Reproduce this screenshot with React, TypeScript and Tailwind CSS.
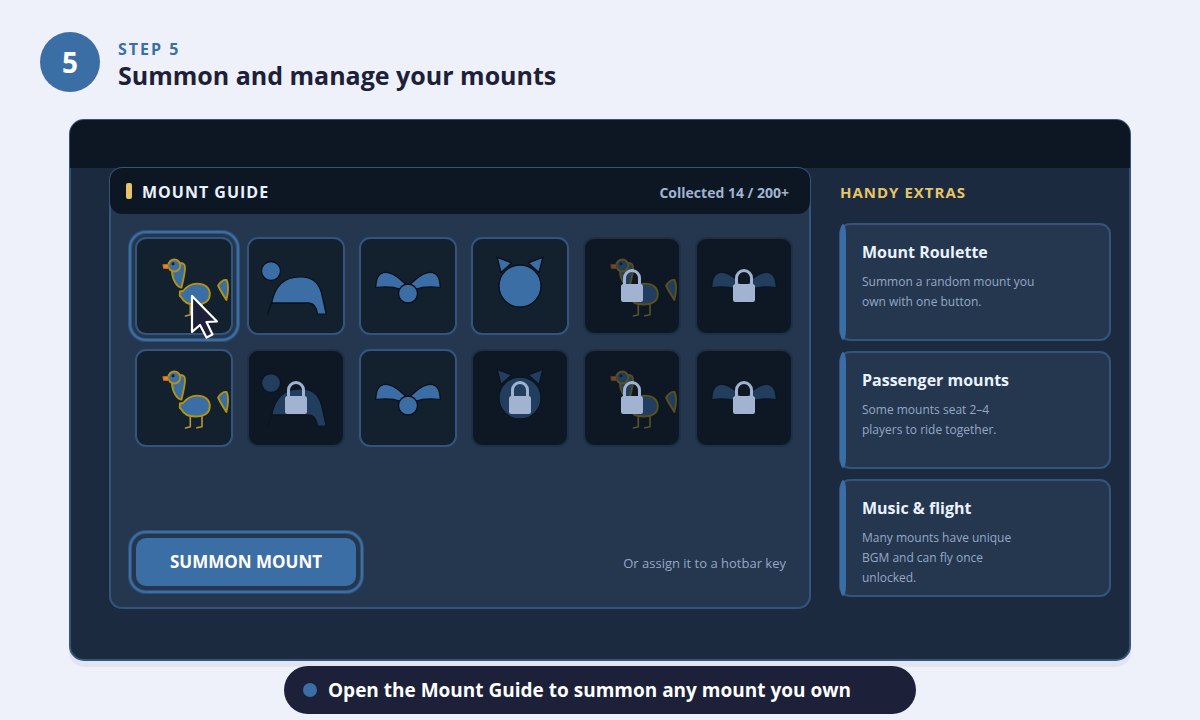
import { clsx } from 'clsx';

type Glyph = 'bird' | 'beast' | 'wings' | 'cat';

interface Mount {
  glyph: Glyph;
  locked?: boolean;
  selected?: boolean;
}

const mounts: Mount[] = [
  { glyph: 'bird', selected: true },
  { glyph: 'beast' },
  { glyph: 'wings' },
  { glyph: 'cat' },
  { glyph: 'bird', locked: true },
  { glyph: 'wings', locked: true },
  { glyph: 'bird' },
  { glyph: 'beast', locked: true },
  { glyph: 'wings' },
  { glyph: 'cat', locked: true },
  { glyph: 'bird', locked: true },
  { glyph: 'wings', locked: true },
];

const extras = [
  {
    title: 'Mount Roulette',
    lines: ['Summon a random mount you', 'own with one button.'],
  },
  {
    title: 'Passenger mounts',
    lines: ['Some mounts seat 2–4', 'players to ride together.'],
  },
  {
    title: 'Music & flight',
    lines: ['Many mounts have unique', 'BGM and can fly once', 'unlocked.'],
  },
];

function Bird() {
  return (
    <g stroke="#b5940f" strokeWidth="1.8" strokeLinejoin="round" fill="#3b6ea5">
      <path
        d="M54.3 66V76.7L49.5 78M66 66V76.7L60.8 77.8"
        fill="none"
        stroke="#b9953c"
        strokeWidth="1.6"
        strokeLinecap="round"
      />
      <path d="M45 25C48.5 25.5 49.5 27 49 31C48.5 38 46.5 45 45.5 49.7C42 49.5 36.5 43 36 34Z" />
      <path d="M43.8 53.5L47 53C51 48 56 45.6 61 45.6C69 45.6 73.8 50 73.8 56C73.8 63 68 66.5 59 66.5C52 66.5 47.5 63.5 45.5 59.5L43.8 58Z" />
      <path d="M82 47.5C84.5 44 88 41.4 90.6 42C92.6 46 92.3 54 90.4 62C87.5 57.5 84.3 52.5 82 47.5Z" />
      <circle cx="38.3" cy="27.5" r="6" />
      <path d="M26.8 26.7L32.5 26.4V30.4L27.6 30.4Z" fill="#e08a2c" stroke="#c7681c" strokeWidth="1" />
      <circle cx="37" cy="25.7" r="1.5" fill="#10202f" stroke="none" />
    </g>
  );
}

function Beast() {
  return (
    <g stroke="#08111b" strokeWidth="1.3" strokeLinejoin="round" fill="#3b6ea5">
      <circle cx="23" cy="33" r="9.5" />
      <path d="M23.7 65C27 47 37 38.8 52 38.8C67 38.8 72 47 74.5 59L78.2 76.2H69.5C68.5 69 66 65 60.5 65Z" />
      <path d="M23.7 65L19.5 76.5" fill="none" />
    </g>
  );
}

function Wings() {
  return (
    <g stroke="#08111b" strokeWidth="1.3" strokeLinejoin="round" fill="#3b6ea5">
      <path d="M15.7 49.7C16 39 19 34.4 25.5 34.4C33 34.4 40 41 46 46.5L40 51.2Q30 47.5 15.7 49.7Z" />
      <path d="M80.3 49.7C80 39 77 34.4 70.5 34.4C63 34.4 56 41 50 46.5L56 51.2Q66 47.5 80.3 49.7Z" />
      <circle cx="48" cy="55.5" r="9.5" />
    </g>
  );
}

function Cat() {
  return (
    <g stroke="#08111b" strokeWidth="1.3" strokeLinejoin="round" fill="#3b6ea5">
      <path d="M25.2 19.3L39.7 24.9L29 34.5Z" />
      <path d="M70.8 19.3L56.3 24.9L67 34.5Z" />
      <circle cx="48" cy="48" r="21" />
    </g>
  );
}

const glyphs = { bird: Bird, beast: Beast, wings: Wings, cat: Cat };

function Cursor() {
  return (
    <svg
      viewBox="0 0 32 48"
      className="absolute left-[52px] top-[54px] z-10 h-12 w-8 pointer-events-none"
      aria-hidden="true"
    >
      <path
        d="M3 3V39L11 32L17.5 44.5L23.5 41.5L17.5 29L28 28.5Z"
        fill="#1c2038"
        stroke="#fff"
        strokeWidth="2.2"
        strokeLinejoin="round"
      />
    </svg>
  );
}

function MountTile({ glyph, locked, selected }: Mount) {
  const Shape = glyphs[glyph];
  return (
    <button
      type="button"
      aria-label={locked ? `${glyph} mount, locked` : `${glyph} mount`}
      className={clsx(
        'relative aspect-square rounded-[11px] border-2',
        locked ? 'bg-[#0e1825] border-[#1f2f46]' : 'bg-[#13202e] border-[#34547d]',
        selected &&
          'shadow-[0_0_0_3px_#24374f,0_0_0_4px_#305379,0_0_0_6px_#3b6ea5,0_0_0_7px_#305379]'
      )}
    >
      <svg viewBox="1 1 94 94" className="block h-full w-full" aria-hidden="true">
        <g opacity={locked ? 0.45 : 1}>
          <Shape />
        </g>
        {locked && (
          <>
            <path
              d="M40.5 47V40a7.5 7.5 0 0 1 15 0V47"
              fill="none"
              stroke="#a1b3d1"
              strokeWidth="3"
            />
            <rect x="37" y="46" width="22" height="18" rx="2.5" fill="#a1b3d1" />
          </>
        )}
      </svg>
      {selected && <Cursor />}
    </button>
  );
}

function MountGuide() {
  return (
    <section className="-mt-px flex flex-1 flex-col rounded-[13px] border-2 border-[#34547d] bg-[#24374f]">
      <header className="-mx-px -mt-px flex h-[46px] items-center rounded-xl bg-[#0d1724] pl-4 pr-[21px]">
        <span className="h-4 w-1.5 rounded-xs bg-[#e8c468]" />
        <h2 className="ml-2.5 pt-0.5 text-base font-bold tracking-[1px] text-[#eaf2ff]">
          MOUNT GUIDE
        </h2>
        <span className="ml-auto pt-1 text-sm font-bold text-[#a1b3d1]">Collected 14 / 200+</span>
      </header>
      <div className="grid grid-cols-6 gap-3.5 pl-6 pr-4 pt-[23px]">
        {mounts.map((mount, i) => (
          <MountTile key={i} {...mount} />
        ))}
      </div>
      <div className="mt-auto flex items-center justify-between pb-[21px] pl-[25px] pr-[23px] pt-6">
        <button
          type="button"
          className="h-12 w-[220px] rounded-[10px] bg-[#3b6ea5] text-[17px] font-bold text-white shadow-[0_0_0_4px_#24374f,0_0_0_5px_#305379,0_0_0_7px_#3b6ea5,0_0_0_8px_#305379]"
        >
          SUMMON MOUNT
        </button>
        <p className="pt-1 text-[13px] text-[#94a8c6]">Or assign it to a hotbar key</p>
      </div>
    </section>
  );
}

function HandyExtras() {
  return (
    <aside className="w-[272px] shrink-0 pb-3">
      <h2 className="mt-3.5 pl-px text-[15px] leading-5 font-bold tracking-[1px] text-[#e8c468]">
        HANDY EXTRAS
      </h2>
      <div className="mt-[21px] flex flex-col gap-2.5">
        {extras.map(({ title, lines }) => (
          <article
            key={title}
            className="flex min-h-[118px] rounded-[11px] border-2 border-[#34547d] bg-[#24374f]"
          >
            <span className="-my-px -ml-px w-1.5 rounded-[3px/10px] bg-[#3b6ea5]" />
            <div className="pl-4 pt-[15px]">
              <h3 className="text-base leading-6 font-bold text-[#eaf2ff]">{title}</h3>
              <p className="mt-2 text-xs leading-5 text-[#94a8c6]">
                {lines.map((line) => (
                  <span key={line} className="block">
                    {line}
                  </span>
                ))}
              </p>
            </div>
          </article>
        ))}
      </div>
    </aside>
  );
}

export default function App() {
  return (
    <div className="flex min-h-screen flex-col bg-[#eef1fa] pb-1.5 font-['Open_Sans','Noto_Sans',sans-serif]">
      <header className="flex items-center gap-[18px] px-10 pt-8">
        <span className="flex size-[60px] items-center justify-center rounded-full bg-[#3b6ea5] text-[28px] font-bold text-white">
          5
        </span>
        <div className="pt-1.5">
          <p className="text-base leading-5 font-bold tracking-[2px] text-[#3b6ea5]">STEP 5</p>
          <h1 className="text-[25px] leading-8 font-bold text-[#1c2038]">
            Summon and manage your mounts
          </h1>
        </div>
      </header>
      <main className="mx-[69px] mt-[27px] rounded-[15px] border-2 border-[#34547d] bg-[#1c2a3f] shadow-[0_6px_0_#e1e4f1]">
        <div className="-mx-px -mt-px h-12 rounded-t-[14px] bg-[#0d1724]" />
        <div className="flex gap-7 pb-[50px] pl-[38px] pr-[18px]">
          <MountGuide />
          <HandyExtras />
        </div>
      </main>
      <div className="z-10 mx-auto mt-[5px] flex h-12 w-[632px] items-center gap-[11px] rounded-full bg-[#1c2038] pl-[19px]">
        <span className="size-3.5 rounded-full bg-[#3b6ea5]" />
        <p className="text-[19px] font-bold text-white">Open the Mount Guide to summon any mount you own</p>
      </div>
    </div>
  );
}
